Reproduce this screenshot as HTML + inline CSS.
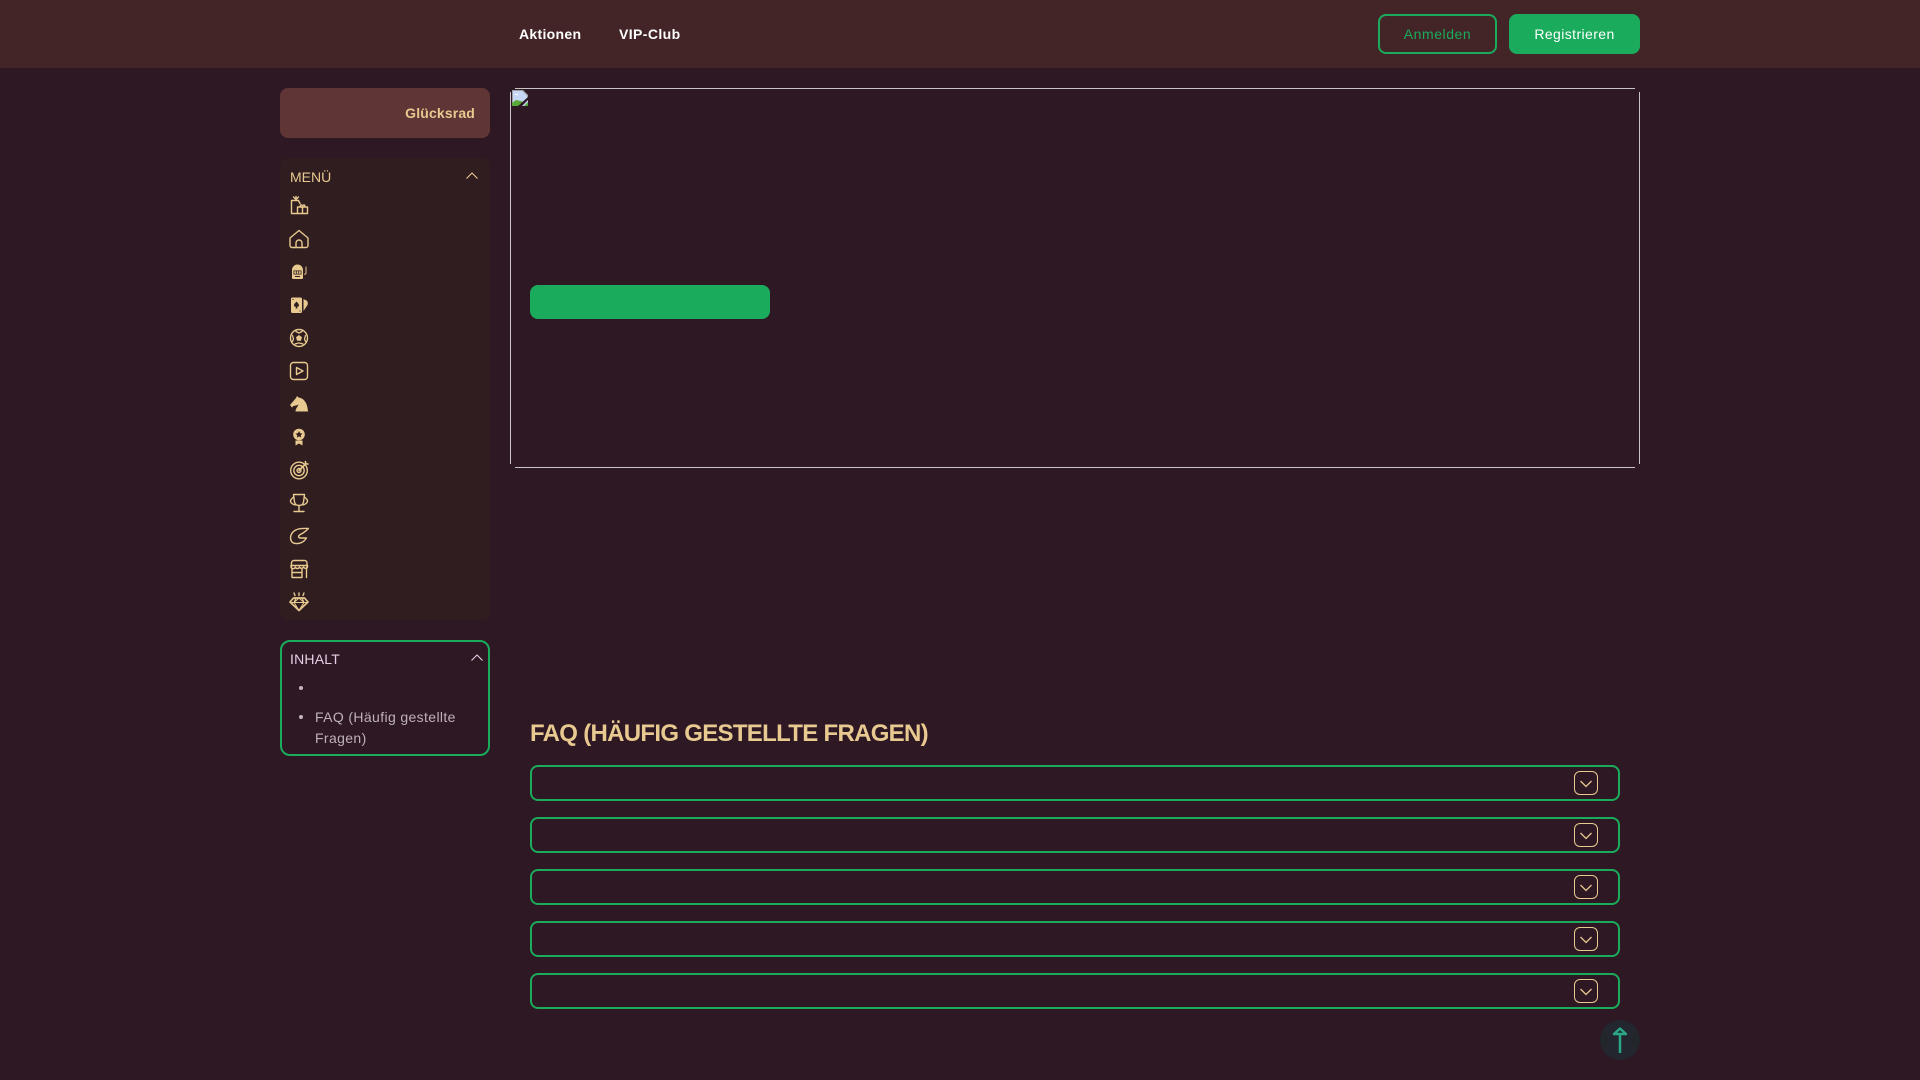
<!DOCTYPE html>
<html lang="de"><head><meta charset="utf-8"><title>FAQ</title>
<style>
*{box-sizing:border-box;margin:0;padding:0}
html,body{width:1920px;height:1080px;overflow:hidden;background:#2d1824;font-family:"Liberation Sans",sans-serif}
.a{position:absolute}
.t{position:absolute;white-space:nowrap;line-height:20px}
.ic{position:absolute;left:289px;width:20px;height:20px;fill:none;stroke:#e8c990;stroke-width:1.4;stroke-linecap:round;stroke-linejoin:round}
.ic .f{fill:#e8c990;stroke:none}
.ic .d{fill:#2f1d1f;stroke:none}
.faq{position:absolute;left:530px;width:1090px;height:36px;border:2px solid #1aab5c;border-radius:8px}
.chev{position:absolute;left:1574px;width:24px;height:24px;border:1px solid #e8c990;border-radius:6px}
.chev svg{position:absolute;left:4px;top:4px;width:14px;height:14px;fill:none;stroke:#e8c990;stroke-width:1.3}
.h{background:#c9c4c6}
</style></head><body>
<div class="a" style="left:0;top:0;width:1920px;height:68px;background:#432527"></div>
<div class="t" style="left:519px;top:24px;font-size:14px;font-weight:700;color:#fff;letter-spacing:.3px">Aktionen</div>
<div class="t" style="left:619px;top:24px;font-size:14px;font-weight:700;color:#fff;letter-spacing:.4px">VIP-Club</div>
<div class="a" style="left:1378px;top:14px;width:119px;height:40px;border:2px solid #1aab5c;border-radius:8px"></div>
<div class="t" style="left:1378px;width:119px;text-align:center;top:24px;font-size:14px;color:#1aab5c;letter-spacing:.55px">Anmelden</div>
<div class="a" style="left:1509px;top:14px;width:131px;height:40px;background:#1aab5c;border-radius:8px"></div>
<div class="t" style="left:1509px;width:131px;text-align:center;top:24px;font-size:14px;color:#fff;letter-spacing:.4px">Registrieren</div>

<div class="a" style="left:280px;top:88px;width:210px;height:50px;background:#5f3535;border-radius:8px"></div>
<div class="t" style="right:1445px;top:103px;font-size:14px;font-weight:700;color:#e8c990;letter-spacing:.15px">Glücksrad</div>

<div class="a" style="left:280px;top:158px;width:210px;height:462px;background:#2f1d1f;border-radius:8px"></div>
<div class="t" style="left:290px;top:167px;font-size:14px;color:#e8c990">MENÜ</div>
<svg class="a" style="left:465px;top:169px" width="14" height="14" fill="none" stroke="#e8c990" stroke-width="1.1"><path d="M1.5 9.5L7 4l5.500 5.500"/></svg>

<svg class="ic" style="top:195px" viewBox="0 0 20 20"><path d="M8 18.500H2.500V5.500H9.500l1.500 3"/><path d="M4.500 2L7 4.500 9.500 2M7 1.500v3"/><rect x="8.500" y="12" width="10" height="6.500"/><path d="M13.500 12v6.500"/><path d="M13.500 12c-3 .5-3-3.500 0-1.500c3-2 3 2 0 1.500z"/></svg>
<svg class="ic" style="top:229px" viewBox="0 0 20 20"><path d="M1 9L10 1.500 19 9v7.500a2 2 0 0 1-2 2H3a2 2 0 0 1-2-2z"/><path d="M7 18.500V14a3 3 0 0 1 6 0v4.500"/></svg>
<svg class="ic" style="top:262px" viewBox="0 0 20 20"><path class="f" d="M3 8a5.500 5.500 0 0 1 11 0v8a1 1 0 0 1-1 1H4a1 1 0 0 1-1-1z"/><rect class="d" x="4.500" y="8.500" width="8" height="4"/><path class="f" d="M5.300 9.300h1.600v2.400H5.300zM7.700 9.300h1.600v2.400H7.700zM10.100 9.300h1.600v2.400h-1.600z"/><path class="d" d="M6 14h5v1H6z"/><path d="M17 5v6c0 1-.7 1.300-1.500 1.300" stroke-width="1"/></svg>
<svg class="ic" style="top:295px" viewBox="0 0 20 20"><path class="f" d="M3.500 2.500h8a1.500 1.500 0 0 1 1.500 1.500v12.500a1.500 1.500 0 0 1-1.500 1.500h-8A1.500 1.500 0 0 1 2 16.500V4a1.500 1.500 0 0 1 1.500-1.500z"/><path class="f" d="M14.500 4l3 1.500c1.500 1 1.500 3 1 4.500l-4 6z"/><path class="d" d="M7.500 6.500c1 1.500 3 2.500 2.300 4.500c-.4 1-1.300 1-1.800.5l.5 2h-2l.5-2c-.5.500-1.400.500-1.800-.5c-.7-2 1.300-3 2.300-4.500z"/><path class="d" d="M3.500 4h1v1h-1zM10.500 15.500h1v1h-1z"/></svg>
<svg class="ic" style="top:328px" viewBox="0 0 20 20"><circle cx="10" cy="10" r="8.500"/><path class="f" d="M10 7l3 2.200-1.100 3.500H8.100L7 9.200z"/><path d="M7 3.500l3 1.500 3-1.500M16.500 7.500l-1 3.500 1 2.500M3.500 7.500l1 3.500-1 2.500M6 16l3.500-1M14 16l-3.500-1" stroke-width="1.300"/></svg>
<svg class="ic" style="top:361px" viewBox="0 0 20 20"><rect x="1.500" y="1.500" width="17" height="17" rx="3"/><path d="M7.500 6.500L14 10l-6.500 3.500z"/></svg>
<svg class="ic" style="top:394px" viewBox="0 0 20 20"><path class="f" d="M1 11l6-7 1-2 1.500 1.500c5 .5 9 5 9.500 14H6.500c0-3 2.500-5 3-7c-1.500 1-3.500 1-5 1.500L3 13.500z"/></svg>
<svg class="ic" style="top:427px" viewBox="0 0 20 20"><circle class="f" cx="10" cy="7.500" r="5.800"/><path class="d" d="M10 4l1.100 2.300 2.400.3-1.800 1.600.5 2.400-2.200-1.200-2.200 1.200.5-2.400-1.800-1.600 2.400-.3z"/><path class="f" d="M6.500 13.500h7V18.500L10 16.500l-3.500 2z"/></svg>
<svg class="ic" style="top:460px" viewBox="0 0 20 20" stroke-width="1.200"><circle cx="10" cy="10.500" r="8.300"/><circle cx="10" cy="10.500" r="5.200"/><circle cx="10" cy="10.500" r="2"/><path d="M10 10.500L17 3.500M16.500 1.500v2.500h2.500" stroke-width="1.600"/></svg>
<svg class="ic" style="top:493px" viewBox="0 0 20 20"><path d="M4.500 1.500h11l-1 7.500c-.5 2.500-2.500 3.500-4.500 3.500s-4-1-4.500-3.500z"/><path d="M4.500 4L2 6.500c-1.500 2 .5 4.500 4 5.500M15.500 4l2.500 2.500c1.500 2-.5 4.500-4 5.500"/><path d="M10 12.500v6M5 18.500h10"/></svg>
<svg class="ic" style="top:526px" viewBox="0 0 20 20"><path d="M19 2.500C15 2.500 8 1.500 3.500 6.500C1 9.500 1 14 3 16c2.500 2.500 9 2 12.500-1.500l2-2.500h-6c-2 0-2.500-2-1-3l3.500-2c1.500-1 3.500-2.500 5.500-4.500z"/></svg>
<svg class="ic" style="top:559px" viewBox="0 0 20 20"><path d="M2.500 9V4a2.500 2.500 0 0 1 2.500-2.500h10A2.500 2.500 0 0 1 18 4v5"/><path d="M2 6.500h16.500M2 6.500v1.500a2.200 2.200 0 0 0 4.300 0a2.200 2.200 0 0 0 4.200 0a2.200 2.200 0 0 0 4 0a2.200 2.200 0 0 0 4 0V6.500"/><path d="M3 10v8.500h10V10M3 13.500h10M17.500 10v8.500"/></svg>
<svg class="ic" style="top:592px" viewBox="0 0 20 20"><path d="M4.500 6h11l3.500 4-9 8.500L1 10z" stroke-width="1.700"/><path d="M1 10.500h18M7 6l-2 4.500 5 8 5-8-2-4.500M5 10.500L10 6l5 4.500" stroke-width="1.100"/><path d="M5 1l1 2.500M10 1v2.500M15 1l-1 2.500"/></svg>

<div class="a" style="left:280px;top:640px;width:210px;height:116px;border:2px solid #1aab5c;border-radius:10px"></div>
<div class="t" style="left:290px;top:649px;font-size:14px;color:#e6cfe6;letter-spacing:.2px">INHALT</div>
<svg class="a" style="left:470px;top:651px" width="14" height="14" fill="none" stroke="#e6cfe6" stroke-width="1.1"><path d="M1.500 9.500L7 4l5.500 5.500"/></svg>
<div class="a" style="left:299px;top:686px;width:4px;height:4px;border-radius:50%;background:#c4b6bf"></div>
<div class="a" style="left:299px;top:715px;width:4px;height:4px;border-radius:50%;background:#c4b6bf"></div>
<div class="t" style="left:315px;top:707px;font-size:14px;color:#bfb1ba;letter-spacing:.37px">FAQ (Häufig gestellte</div>
<div class="t" style="left:315px;top:728px;font-size:14px;color:#bfb1ba;letter-spacing:.37px">Fragen)</div>

<div class="a h" style="left:515px;top:88px;width:1120px;height:1px"></div>
<div class="a h" style="left:515px;top:467px;width:1120px;height:1px"></div>
<div class="a h" style="left:510px;top:92px;width:1px;height:372px"></div>
<div class="a h" style="left:1639px;top:92px;width:1px;height:372px"></div>
<svg class="a" style="left:512px;top:90px" width="16" height="16" viewBox="0 0 16 16"><path d="M0 0h11l5 5v11H0z" fill="#c7d7f8"/><path d="M.5.500h10l5 5V9M.5.500V15.500" fill="none" stroke="#a0a0a0"/><path d="M3 4h3v1H3z" fill="#fff"/><path d="M0 16v-3l4-3 5 1 2 1-4 4z" fill="#5ba83a"/><path d="M6 16L16 7v3l-6 6z" fill="#2d1824"/><path d="M12 16l4-4v4z" fill="#5ba83a"/></svg>
<div class="a" style="left:530px;top:285px;width:240px;height:34px;background:#1aab5c;border-radius:8px"></div>

<div class="t" style="left:530px;top:720px;line-height:28px;font-size:24px;font-weight:700;color:#e8c990;letter-spacing:-.7px">FAQ (HÄUFIG GESTELLTE FRAGEN)</div>

<div class="faq" style="top:765px"></div><div class="chev" style="top:771px"><svg viewBox="0 0 14 14"><path d="M1.500 5l5.500 5.500 5.500-5.500"/></svg></div>
<div class="faq" style="top:817px"></div><div class="chev" style="top:823px"><svg viewBox="0 0 14 14"><path d="M1.500 5l5.500 5.500 5.500-5.500"/></svg></div>
<div class="faq" style="top:869px"></div><div class="chev" style="top:875px"><svg viewBox="0 0 14 14"><path d="M1.500 5l5.500 5.500 5.500-5.500"/></svg></div>
<div class="faq" style="top:921px"></div><div class="chev" style="top:927px"><svg viewBox="0 0 14 14"><path d="M1.500 5l5.500 5.500 5.500-5.500"/></svg></div>
<div class="faq" style="top:973px"></div><div class="chev" style="top:979px"><svg viewBox="0 0 14 14"><path d="M1.500 5l5.500 5.500 5.500-5.500"/></svg></div>

<svg class="a" style="left:1600px;top:1020px" width="40" height="40" viewBox="0 0 40 40"><circle cx="20" cy="20" r="20" fill="#23262d"/><path d="M20 14v19" stroke="#2aa585" stroke-width="2.500" fill="none"/><path d="M20 8.500L26 14H14z" fill="none" stroke="#2aa585" stroke-width="2.500" stroke-linejoin="round"/></svg>
</body></html>
